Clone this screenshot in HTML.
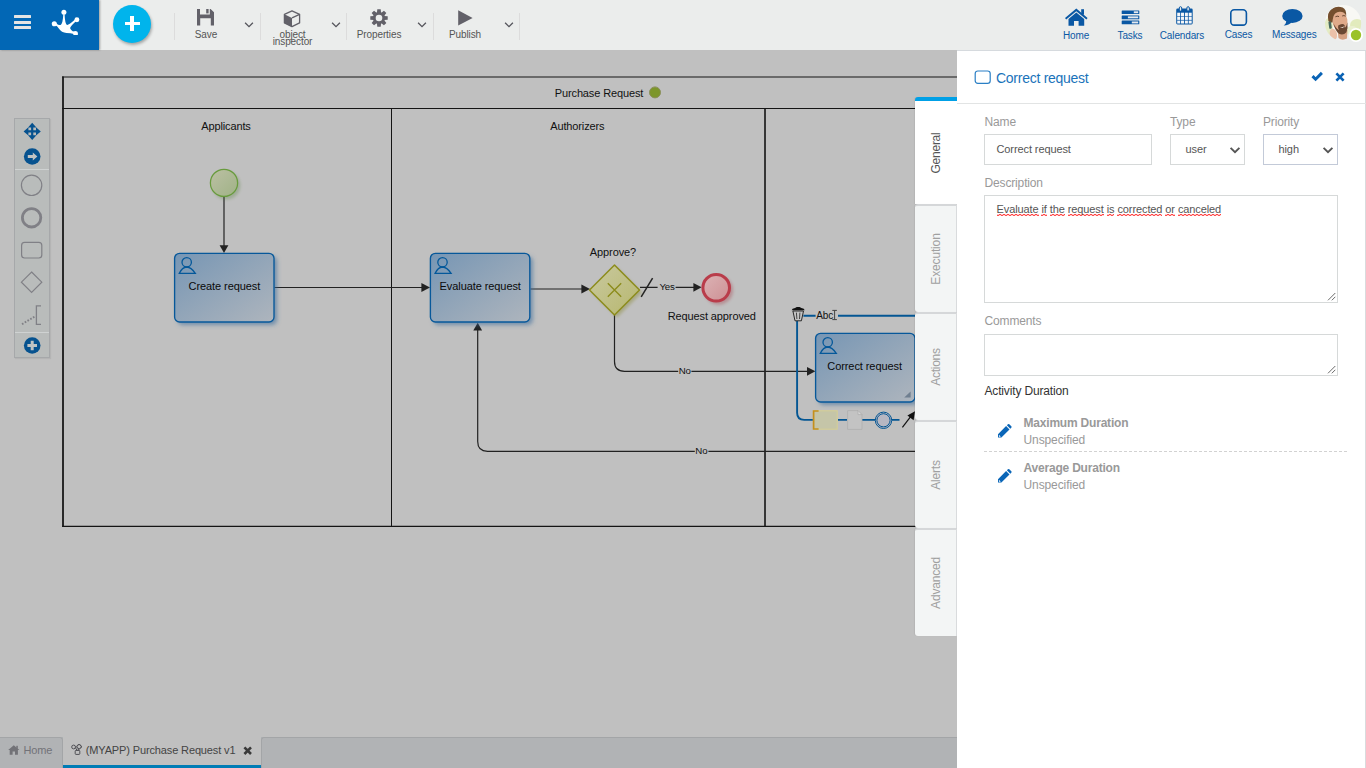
<!DOCTYPE html>
<html lang="en">
<head>
<meta charset="utf-8">
<title>Purchase Request</title>
<style>
*{box-sizing:border-box;margin:0;padding:0}
html,body{width:1366px;height:768px;overflow:hidden}
body{position:relative;background:#c0c0c0;font-family:"Liberation Sans",Arial,sans-serif;font-size:12px;color:#333}
#header{position:absolute;left:0;top:0;width:1366px;height:50px;background:#ebedec}
#brand{position:absolute;left:0;top:0;width:99px;height:50px;background:#0267b5;box-shadow:1px 0 2px rgba(0,0,0,.35)}
#plus{position:absolute;left:113px;top:5px;width:38px;height:38px;border-radius:50%;background:#00b4ec;box-shadow:1px 2px 3px rgba(0,0,0,.3)}
.sep{position:absolute;top:13px;width:1px;height:27px;background:#dcdcdc}
.tbtn{position:absolute;top:0;height:50px;color:#555;font-size:11px;text-align:center;line-height:8px}
.tbtn svg{position:absolute}
.tlabel{position:absolute;left:0;width:100%;text-align:center}
.nav{position:absolute;top:0;height:50px;color:#0a5aa8;font-size:11px;text-align:center}
#canvas{position:absolute;left:0;top:50px;width:957px;height:688px}
#panel{position:absolute;left:957px;top:50px;width:409px;height:718px;background:#fff;box-shadow:inset 0 1px 0 #d6dade,inset -1px 0 0 #d9dbdd}
#vtabs{position:absolute;left:915px;top:97px;width:42px}
.vtab{position:absolute;left:0;width:42px;background:#f3f5f5;border-top:2px solid #d5d7d9;border-right:1px solid #d9dbdd;border-radius:3px 0 0 3px;box-shadow:-1px 0 1px rgba(0,0,0,.06)}
.vtab span{position:absolute;left:50%;top:50%;transform:translate(-50%,-50%) rotate(-90deg);white-space:nowrap;font-size:12px;color:#a0a0a0;}
#btabs{position:absolute;left:0;top:737px;width:957px;height:31px;background:#b1b3b5}

.abs{position:absolute}
.t{position:absolute;white-space:nowrap;line-height:1}
#ptitle{font-size:14px;color:#1a73ba;letter-spacing:-.27px}
#phr{position:absolute;left:0;top:53px;width:409px;height:1px;background:#e2e4e4}
.lbl{font-size:12px;color:#999;letter-spacing:-.15px}
.inp{position:absolute;border:1px solid #d6d9d9;background:#fff}
.val{font-size:11px;color:#555;letter-spacing:-.1px}
#desc u{text-decoration:none;display:inline-block;padding-bottom:.6px;background:repeating-linear-gradient(90deg,rgba(255,20,20,.75) 0 2px,rgba(255,20,20,.2) 2px 4px) 0 100%/100% 1px no-repeat,repeating-linear-gradient(90deg,rgba(255,20,20,.25) 0 2px,rgba(255,20,20,.8) 2px 4px) 0 calc(100% - 1px)/100% 1px no-repeat}
.dur{font-size:12px;font-weight:700;color:#999;letter-spacing:-.2px}
.uns{font-size:12px;color:#999;letter-spacing:-.1px}
.dash{position:absolute;left:27px;width:363px;height:1px;background:repeating-linear-gradient(90deg,#d2d2d2 0 3px,transparent 3px 5px)}

.hb{position:absolute;left:14.3px;width:16.8px;height:2.8px;background:#e4e4e4;border-radius:.5px}
#plus i{position:absolute;background:#fff;display:block}
.tl{font-size:10px;color:#555;text-align:center;letter-spacing:-.1px}
.nl{font-size:10px;color:#0a58a4;text-align:center;letter-spacing:-.13px}

.vtab.act{background:#fff;border-top:4px solid #00a0e6;border-right:0;border-radius:3px 0 0 0}
#bt1{position:absolute;left:0;top:0;width:63px;height:31px;border-right:1px solid #a3a5a7;border-top:1px solid #a3a5a7;border-radius:0 3px 0 0}
#bt2{position:absolute;left:63px;top:0;width:198px;height:31px;background:#c0c0c0;border-bottom:3px solid #007cb5}
#bt3{position:absolute;left:261px;top:0;width:696px;height:31px;border-left:1px solid #a3a5a7;border-top:1px solid #a3a5a7;border-radius:3px 0 0 0}

#pal{position:absolute;left:14px;top:118px;width:36px;height:240px;background:#b9bcbb;border:1px solid #a6a8aa;box-shadow:1px 1px 1px rgba(0,0,0,.06)}
</style>
</head>
<body>
<div id="header">
  <div id="brand">
    <div class="hb" style="top:15px"></div><div class="hb" style="top:21px"></div><div class="hb" style="top:26.2px"></div>
    <svg class="abs" style="left:50px;top:8px" width="32" height="30" viewBox="50 8 32 30">
      <g fill="#fff"><circle cx="63.9" cy="12.3" r="2.5"/><circle cx="76.9" cy="19.8" r="2.45"/><circle cx="54.3" cy="23.7" r="2.55"/><path d="M73.2 31.6 Q75.3 30.2 77.2 31.6 Q78.4 33 77.8 34.9 H73.4 Z"/>
      <path d="M56.3 23.2 Q58.8 25.7 60.6 24.9 Q62.9 23.4 63.3 14.2 L64.6 14.2 Q64.9 23.6 67 24.9 Q68.4 25.4 75.6 19 L76.8 20.5 Q70.6 26 70.2 27.8 Q69.9 29.9 74.2 32 L74 33.9 Q70.5 32.9 66.5 32.9 Q61.5 32.8 58.8 28.6 Q57.4 26.2 55.4 25.2 Z"/></g>
    </svg>
  </div>
  <div id="plus"><i style="left:11.5px;top:16.6px;width:15.6px;height:3.6px"></i><i style="left:17.2px;top:11.3px;width:4.2px;height:14.4px"></i></div>
  <div class="sep" style="left:174px"></div><div class="sep" style="left:260px"></div><div class="sep" style="left:346px"></div><div class="sep" style="left:433px"></div><div class="sep" style="left:519px"></div>

  <svg class="abs" style="left:197px;top:9px" width="17" height="17" viewBox="0 0 17 17"><path d="M0 0 H13.6 L17 3.2 V16.4 H0 Z M3 0 V5.6 H12.8 V0 Z M3.2 9.2 V16.4 H13.8 V9.2 Z" fill="#626169" fill-rule="evenodd"/><rect x="9.2" y="0" width="2.4" height="4.4" fill="#626169"/></svg>
  <div class="t tl" style="left:174px;width:64px;top:29.5px">Save</div><svg class="abs" style="left:244px;top:20.8px" width="10" height="8" viewBox="0 0 10 8"><path d="M1.1 1.8 L5 5.7 L8.9 1.8" fill="none" stroke="#55555c" stroke-width="1.3"/></svg>

  <svg class="abs" style="left:283px;top:9.6px" width="18" height="18" viewBox="0 0 18 18"><path d="M9 .9 L16.6 4.3 V12.9 L9 16.7 L1.4 12.9 V4.3 Z" fill="#ebedec" stroke="#626169" stroke-width="1.3" stroke-linejoin="round"/><path d="M1.4 4.3 L9 7.9 V16.7 L1.4 12.9 Z" fill="#626169"/><path d="M9 7.9 L16.6 4.3" stroke="#626169" stroke-width="1.3"/></svg>
  <div class="t tl" style="left:260px;width:65px;top:29.5px">object</div><div class="t tl" style="left:260px;width:65px;top:37.4px">inspector</div><svg class="abs" style="left:330.5px;top:20.8px" width="10" height="8" viewBox="0 0 10 8"><path d="M1.1 1.8 L5 5.7 L8.9 1.8" fill="none" stroke="#55555c" stroke-width="1.3"/></svg>

  <svg class="abs" style="left:370.1px;top:9.1px" width="18" height="18" viewBox="-9 -9 18 18"><g fill="#626169"><circle r="6.1"/><path id="tooth" d="M-1.7 -8.7 H1.7 L2.1 -5 H-2.1 Z M-1.7 8.7 H1.7 L2.1 5 H-2.1 Z"/><use href="#tooth" transform="rotate(45)"/><use href="#tooth" transform="rotate(90)"/><use href="#tooth" transform="rotate(135)"/></g><circle r="3.3" fill="#ebedec"/></svg>
  <div class="t tl" style="left:346px;width:66px;top:29.5px">Properties</div><svg class="abs" style="left:417px;top:20.8px" width="10" height="8" viewBox="0 0 10 8"><path d="M1.1 1.8 L5 5.7 L8.9 1.8" fill="none" stroke="#55555c" stroke-width="1.3"/></svg>

  <svg class="abs" style="left:458px;top:9.5px" width="15" height="16" viewBox="0 0 15 16"><path d="M.2 .3 L14.6 7.9 L.2 15.6 Z" fill="#626169"/></svg>
  <div class="t tl" style="left:433px;width:64px;top:29.5px">Publish</div><svg class="abs" style="left:503.5px;top:20.8px" width="10" height="8" viewBox="0 0 10 8"><path d="M1.1 1.8 L5 5.7 L8.9 1.8" fill="none" stroke="#55555c" stroke-width="1.3"/></svg>

  <svg class="abs" style="left:1064px;top:8px" width="24" height="18" viewBox="1064 8 24 18"><g fill="#0a58a4"><path d="M1076.3 8.6 L1087.6 18 L1086.4 19.5 L1076.3 11.2 L1066.2 19.5 L1065 18 Z"/><path d="M1076.3 12.4 L1084.2 18.9 V25.8 H1078.6 V21 H1074 V25.8 H1068.5 V18.9 Z"/><rect x="1081.2" y="9.2" width="2.8" height="5.5"/></g></svg>
  <div class="t nl" style="left:1046px;width:60px;top:31.2px">Home</div>

  <svg class="abs" style="left:1121px;top:9.5px" width="19" height="15" viewBox="0 0 19 15"><g fill="#0a58a4"><rect x=".7" y=".4" width="17.6" height="3.7" rx=".5"/><rect x=".7" y="5.5" width="17.6" height="3.7" rx=".5"/><rect x=".7" y="10.6" width="17.6" height="3.7" rx=".5"/></g><g fill="#e4e9ef"><rect x="12.8" y="1.3" width="4.4" height="1.9"/><rect x="6.9" y="6.4" width="10.3" height="1.9"/><rect x="10.8" y="11.5" width="6.4" height="1.9"/></g></svg>
  <div class="t nl" style="left:1100px;width:60px;top:31.2px">Tasks</div>

  <svg class="abs" style="left:1175px;top:6.2px" width="19" height="20" viewBox="0 0 19 20"><rect x="1.2" y="2.5" width="16.5" height="16" rx="1.4" fill="#0a58a4"/><g fill="#f4f6f8"><rect x="2.2" y="6.7" width="3" height="3.3"/><rect x="6.0" y="6.7" width="3" height="3.3"/><rect x="9.9" y="6.7" width="3" height="3.3"/><rect x="13.7" y="6.7" width="3" height="3.3"/><rect x="2.2" y="10.6" width="3" height="3.3"/><rect x="6.0" y="10.6" width="3" height="3.3"/><rect x="9.9" y="10.6" width="3" height="3.3"/><rect x="13.7" y="10.6" width="3" height="3.3"/><rect x="2.2" y="14.6" width="3" height="2.9"/><rect x="6.0" y="14.6" width="3" height="2.9"/><rect x="9.9" y="14.6" width="3" height="2.9"/><rect x="13.7" y="14.6" width="3" height="2.9"/></g><g fill="#ebedec" stroke="#0a58a4" stroke-width="1"><rect x="4.3" y=".7" width="2.4" height="4.4" rx="1.2"/><rect x="11.9" y=".7" width="2.4" height="4.4" rx="1.2"/></g></svg>
  <div class="t nl" style="left:1152px;width:60px;top:31.2px">Calendars</div>

  <svg class="abs" style="left:1229px;top:8px" width="19" height="19" viewBox="0 0 19 19"><rect x="1.8" y="1.7" width="15.6" height="15.4" rx="3.4" fill="none" stroke="#0a58a4" stroke-width="1.6"/></svg>
  <div class="t nl" style="left:1208.5px;width:60px;top:30.3px">Cases</div>

  <svg class="abs" style="left:1281px;top:8px" width="23" height="19" viewBox="1281 8 23 19"><g fill="#0a58a4"><ellipse cx="1292.4" cy="15.9" rx="10.2" ry="7"/><path d="M1286.2 20 Q1286.6 23.6 1283.6 25.6 Q1289 25.4 1292.4 21.6 Z"/></g></svg>
  <div class="t nl" style="left:1264.3px;width:60px;top:30.3px">Messages</div>

  <svg class="abs" style="left:1322px;top:2px" width="44" height="44" viewBox="1322 2 44 44">
    <defs><clipPath id="avc"><circle cx="1343.1" cy="23" r="18.1"/></clipPath><filter id="avb" x="-10%" y="-10%" width="120%" height="120%"><feGaussianBlur stdDeviation=".5"/></filter></defs>
    <g clip-path="url(#avc)"><g filter="url(#avb)">
      <rect x="1322" y="2" width="44" height="44" fill="#f8f8f4"/>
      <ellipse cx="1357" cy="25" rx="7" ry="6" fill="#e2ebbd"/><ellipse cx="1352" cy="31" rx="6" ry="5" fill="#eaf0d0"/>
      <ellipse cx="1328.5" cy="27" rx="4.5" ry="9" fill="#e4ecc4"/>
      <path d="M1334 44 L1336 36 L1348 34 L1352 38 L1356 44 Z" fill="#efeeee"/>
      <path d="M1337.5 30 L1347.5 30 L1347 38.5 Q1342 41 1338.5 38 Z" fill="#d49f80"/>
      <ellipse cx="1339.8" cy="20.6" rx="7.6" ry="10.6" fill="#e0aa8a" transform="rotate(-10 1339.8 20.6)"/>
      <path d="M1333.4 23 Q1334.8 30.5 1339 33.8 Q1343.2 35.8 1346.4 32.3 Q1348.2 28 1347.4 22.5 Q1346.4 27 1344.6 28.2 Q1345.6 25.4 1343.6 24.2 Q1341 23.2 1338.2 25.6 Q1337.6 28.4 1339 30 Q1335.4 28.2 1333.4 23 Z" fill="#6a4732"/>
      <path d="M1339.4 26.6 Q1342.4 28 1345 25.8 Q1343 29.6 1339.4 26.6 Z" fill="#efe2da"/><path d="M1339 30 Q1342 31.8 1344.6 28.2 Q1343.6 31.6 1341 32 Z" fill="#6a4732"/>
      <path d="M1328.4 21 Q1326.6 12.5 1331.6 9 Q1337 5.6 1342.6 7.6 Q1346.6 9.6 1346.2 16 Q1344.4 11.4 1339.4 11.8 Q1334.6 12.4 1333.4 16.6 Q1332.6 19.6 1332.4 22.5 Q1330 23 1328.4 21 Z" fill="#74502f"/>
      <path d="M1335.4 16.8 Q1337.2 15.6 1339 16.6 M1342.2 16 Q1344 15 1345.6 16.2" stroke="#5a3c28" stroke-width=".9" fill="none"/>
      <ellipse cx="1333.4" cy="34.2" rx="3.6" ry="5.6" fill="#ecc1aa" transform="rotate(-14 1333.4 34.2)"/>
      <rect x="1328.8" y="21.4" width="2.6" height="7.4" rx="1" fill="#4a6a5e" transform="rotate(-8 1330 25)"/>
    </g></g>
    <circle cx="1356" cy="35" r="7" fill="#fff"/><circle cx="1356" cy="35" r="5.2" fill="#9bc22a"/>
  </svg>
</div>
<div id="canvas">
<svg id="diagram" width="957" height="688" viewBox="0 50 957 688" font-family="Liberation Sans, Arial, sans-serif">
<defs>
  <linearGradient id="gTask" x1="0" y1="0" x2="1" y2="1">
    <stop offset="0" stop-color="#7796b4"/><stop offset="1" stop-color="#aeb5bd"/>
  </linearGradient>
  <linearGradient id="gStart" x1="0" y1="0" x2="1" y2="1">
    <stop offset="0" stop-color="#bcc0a4"/><stop offset="1" stop-color="#9fb286"/>
  </linearGradient>
  <linearGradient id="gGate" x1="0" y1="0" x2="1" y2="1">
    <stop offset="0" stop-color="#c9c9a0"/><stop offset="1" stop-color="#b7b76e"/>
  </linearGradient>
  <linearGradient id="gEnd" x1="0" y1="0" x2="1" y2="1">
    <stop offset="0" stop-color="#dcb3b5"/><stop offset="1" stop-color="#cd9094"/>
  </linearGradient>
  <filter id="shB" x="-20%" y="-20%" width="150%" height="150%">
    <feGaussianBlur in="SourceAlpha" stdDeviation="2" result="b"/><feOffset in="b" dx="2.5" dy="3" result="o"/>
    <feFlood flood-color="#3a6c9c" flood-opacity=".6" result="f"/><feComposite in="f" in2="o" operator="in"/>
  </filter>
  <filter id="blur2" x="-30%" y="-30%" width="160%" height="160%"><feGaussianBlur stdDeviation="1.8"/></filter>
  <g id="user" fill="none" stroke="#04589a" stroke-width="1.3">
    <circle cx="12.6" cy="8.7" r="4.7"/>
    <path d="M5.2 19.7 Q8.2 13.6 12.6 13.4 Q17 13.6 21.2 19.7 Z" stroke-linejoin="miter"/>
  </g>
</defs>
<!-- pool -->
<g fill="none" stroke="#141414">
  <path d="M62 76.9 H957" stroke-width="1.05"/>
  <path d="M63 76.4 V526.9" stroke-width="1.75"/>
  <path d="M62.2 108.5 H957 M391.5 108 V526.3" stroke-width="1"/>
  <path d="M765 108 V526.3" stroke-width="1.6"/>
  <path d="M62.2 526.3 H957" stroke-width="1.2"/>
</g>
<g font-size="11" fill="#111" text-anchor="middle" letter-spacing="-.13">
  <text x="599" y="96.9">Purchase Request</text>
  <text x="226" y="130">Applicants</text>
  <text x="577.3" y="130">Authorizers</text>
</g>
<circle cx="655" cy="92.4" r="5.5" fill="#7d962b" stroke="#8a8f5a" stroke-width="1"/>
<!-- flows -->
<g fill="none" stroke="#222" stroke-width="1.2">
  <path d="M224 197 V246"/>
  <path d="M274.5 287.5 H422"/>
  <path d="M530.5 289 H582"/>
  <path d="M640 287.3 H657.6 M675.6 287.3 H694"/>
  <path d="M614.5 315 V361.5 Q614.5 371.3 624.5 371.3 H678.2 M691.4 371.3 H808"/>
  <path d="M957 451.3 H708.4 M694.8 451.3 H487.5 Q477.7 451.3 477.7 441.5 V330"/>
  <path d="M641.2 296.8 L652.6 278.2" stroke-width="1.5"/>
</g>
<g fill="#222">
  <path d="M219.6 245.3 H228.4 L224 253 Z"/>
  <path d="M421.4 283.1 V291.9 L430 287.5 Z"/>
  <path d="M581.4 284.6 V293.4 L590 289 Z"/>
  <path d="M693.4 282.9 V291.7 L701.6 287.3 Z"/>
  <path d="M807 366.9 V375.7 L815.4 371.3 Z"/>
  <path d="M473.3 330.6 H482.1 L477.7 322.8 Z"/>
</g>
<g font-size="9.7" fill="#111" letter-spacing="-.15">
  <text x="659.4" y="290.3">Yes</text>
  <text x="678.7" y="374.3">No</text>
  <text x="695.3" y="454.3">No</text>
</g>
<!-- start -->
<circle cx="226.3" cy="185.5" r="14" fill="#4c7a2c" opacity=".28" filter="url(#blur2)"/>
<circle cx="224" cy="182.9" r="13.6" fill="url(#gStart)" stroke="#689b3d" stroke-width="1.25"/>
<g><rect x="174.6" y="253.3" width="99.4" height="68.7" rx="5" fill="#000" filter="url(#shB)"/>
<rect x="174.6" y="253.3" width="99.4" height="68.7" rx="5" fill="url(#gTask)" stroke="#07589a" stroke-width="1.35"/>
<use href="#user" x="174.1" y="253.6"/>
<text x="224.39999999999998" y="290.0" font-size="11" fill="#0a0a0a" text-anchor="middle" letter-spacing="-.08">Create request</text></g>
<g><rect x="430.4" y="253.3" width="99.4" height="68.7" rx="5" fill="#000" filter="url(#shB)"/>
<rect x="430.4" y="253.3" width="99.4" height="68.7" rx="5" fill="url(#gTask)" stroke="#07589a" stroke-width="1.35"/>
<use href="#user" x="429.9" y="253.6"/>
<text x="480.2" y="290.0" font-size="11" fill="#0a0a0a" text-anchor="middle" letter-spacing="-.08">Evaluate request</text></g>
<!-- gateway -->
<path d="M617 267.5 L642 292.5 L617 317.5 L592 292.5 Z" fill="#7c7c10" opacity=".35" filter="url(#blur2)"/>
<path d="M614.5 265 L639.5 290 L614.5 315 L589.5 290 Z" fill="url(#gGate)" stroke="#8c8c1c" stroke-width="1.5" stroke-linejoin="round"/>
<path d="M607.8 283.3 L621.2 296.7 M621.2 283.3 L607.8 296.7" stroke="#8c8c1c" stroke-width="1.4" fill="none"/>
<text x="613" y="255.6" font-size="11" fill="#111" text-anchor="middle" letter-spacing="-.1">Approve?</text>
<!-- end -->
<circle cx="718.6" cy="290.2" r="14.5" fill="#a02030" opacity=".3" filter="url(#blur2)"/>
<circle cx="716.2" cy="287.8" r="13.3" fill="url(#gEnd)" stroke="#b93c4a" stroke-width="3"/>
<text x="711.8" y="320" font-size="11" fill="#111" text-anchor="middle" letter-spacing="-.12">Request approved</text>
<!-- selected task frame -->
<g fill="none" stroke="#045693" stroke-width="1.9">
  <path d="M803.4 315.7 H815.6 M838 315.7 H957"/>
  <path d="M797.1 321 V412.8 Q797.1 419.9 804.2 419.9 H813 M838 419.9 H847 M862 419.9 H875 M892 419.9 H899.5"/>
</g>
<g><rect x="815.6" y="333.3" width="99.4" height="68.7" rx="5" fill="#000" filter="url(#shB)"/>
<rect x="815.6" y="333.3" width="99.4" height="68.7" rx="5" fill="url(#gTask)" stroke="#07589a" stroke-width="1.35"/>
<use href="#user" x="815.1" y="333.6"/>
<text x="864.6" y="370.0" font-size="11" fill="#0a0a0a" text-anchor="middle" letter-spacing="-.08">Correct request</text><path d="M910.6 391.4 V397.6 H904.2 Z" fill="#6f7f90"/></g>
<text x="816.2" y="319.3" font-size="10" fill="#111" letter-spacing="-.1">Abc</text>
<path d="M832.3 310.4 H836.9 M832.3 319.6 H836.9 M834.6 310.4 V319.6" stroke="#444" stroke-width="1" fill="none"/>
<!-- trash -->
<path d="M792.9 311 L795 320.8 H801.4 L803.5 311 Z" fill="#c4c4c4" stroke="#2a2a2a" stroke-width="1"/>
<path d="M796.4 312.6 L796.9 319 M799.9 312.6 L799.5 319" stroke="#333" stroke-width=".9" fill="none"/>
<path d="M791.7 310.3 Q791.9 308.7 795 308.1 L796.8 307 H799.6 L801.4 308.1 Q804.5 308.7 804.7 310.3 Z" fill="#111"/>
<!-- mini toolbar -->
<rect x="813.4" y="410.8" width="23.8" height="18.4" fill="#c5c5a8" stroke="#d6cf92" stroke-width="1"/>
<path d="M818.6 411 H813.6 V429 H818.6" fill="none" stroke="#c48f1c" stroke-width="1.7"/>
<path d="M847.6 410.6 H858 L862 414.6 V429.4 H847.6 Z" fill="#c3c3c3" stroke="#aeaeae" stroke-width=".8"/>
<path d="M858 410.6 V414.6 H862 Z" fill="#d6d6d6" stroke="#aeaeae" stroke-width=".7"/>
<circle cx="883.5" cy="420.3" r="8.2" fill="#b7b7c2" stroke="#045693" stroke-width="1"/>
<circle cx="883.5" cy="420.3" r="6.6" fill="none" stroke="#045693" stroke-width="1"/>
<path d="M902.4 427.4 L911 416.2" stroke="#111" stroke-width="1.2" fill="none"/>
<path d="M915 411.2 L913.6 420.2 L907.4 415.4 Z" fill="#111"/>
</svg>
</div>
<div id="pal">
  <svg width="36" height="240" viewBox="14 118 36 240" style="position:absolute;left:-1px;top:-1px">
    <g stroke="#cfd2d2" stroke-width="1"><path d="M15 169.5 H49 M15 332.5 H49"/></g>
    <g fill="#06528f">
      <path d="M32.2 122.8 L36.4 127.6 H33.3 V130.3 H36 V127.2 L40.8 131.4 L36 135.6 V132.5 H33.3 V135.2 H36.4 L32.2 140 L28 135.2 H31.1 V132.5 H28.4 V135.6 L23.6 131.4 L28.4 127.2 V130.3 H31.1 V127.6 H28 Z"/>
      <circle cx="32.2" cy="156.5" r="8.3"/>
      <circle cx="32.2" cy="345.5" r="8.3"/>
    </g>
    <path d="M27.8 155 H32.8 V152.6 L37.4 156.5 L32.8 160.4 V158 H27.8 Z" fill="#c0c3c3"/>
    <path d="M27.4 344 H30.7 V340.7 H33.7 V344 H37 V347 H33.7 V350.3 H30.7 V347 H27.4 Z" fill="#c0c3c3"/>
    <g fill="none" stroke="#808086">
      <circle cx="31.6" cy="185.3" r="10.2" stroke-width="1.2"/>
      <circle cx="31.6" cy="217.8" r="9.2" stroke-width="2.8"/>
      <rect x="21.6" y="242.4" width="20.2" height="15.6" rx="3" stroke-width="1.2"/>
      <path d="M31.6 272 L41.8 282.2 L31.6 292.4 L21.4 282.2 Z" stroke-width="1.2"/>
      <path d="M41 305.8 H36.4 V324.4 H41" stroke-width="1.3"/>
      <path d="M22 324.2 L35.6 316" stroke-width="1.9" stroke-dasharray="1.7 1.5"/>
    </g>
  </svg>
</div>
<div id="vtabs">
  <div class="vtab act" style="top:0;height:107px"><span style="color:#555;letter-spacing:-.25px">General</span></div>
  <div class="vtab" style="top:107px;height:108px"><span style="letter-spacing:-.15px">Execution</span></div>
  <div class="vtab" style="top:215px;height:108px"><span style="letter-spacing:-.3px">Actions</span></div>
  <div class="vtab" style="top:323px;height:108px"><span style="letter-spacing:-.2px">Alerts</span></div>
  <div class="vtab" style="top:431px;height:108px"><span style="letter-spacing:-.2px">Advanced</span></div>
</div>
<div id="panel">
  <svg class="abs" style="left:17px;top:19.5px" width="18" height="15" viewBox="0 0 18 15"><rect x="1.2" y="1" width="15" height="12.4" rx="2.6" fill="none" stroke="#2a7fc5" stroke-width="1.2"/></svg>
  <div class="t" id="ptitle" style="left:39px;top:21px">Correct request</div>
  <svg class="abs" style="left:353.6px;top:21.2px" width="13" height="11" viewBox="0 0 13 11"><path d="M1.5 5.1 L4.6 8.2 L10.9 1.9" fill="none" stroke="#0a64b6" stroke-width="3"/></svg>
  <svg class="abs" style="left:378.1px;top:21.7px" width="10" height="10" viewBox="0 0 10 10"><path d="M1.4 1.4 L8.6 8.6 M8.6 1.4 L1.4 8.6" fill="none" stroke="#0a62b4" stroke-width="2.7"/></svg>
  <div id="phr"></div>

  <div class="t lbl" style="left:27.5px;top:65.5px">Name</div>
  <div class="t lbl" style="left:213px;top:65.5px">Type</div>
  <div class="t lbl" style="left:306px;top:65.5px">Priority</div>
  <div class="inp" style="left:27px;top:84px;width:168px;height:31px"><span class="t val" style="left:11.5px;top:8.5px">Correct request</span></div>
  <div class="inp" style="left:213px;top:84px;width:75px;height:31px"><span class="t val" style="left:14.5px;top:8.5px">user</span>
    <svg class="abs" style="left:58.3px;top:10.5px" width="12" height="9" viewBox="0 0 12 9"><path d="M1.6 1.8 L6 6.2 L10.4 1.8" fill="none" stroke="#555" stroke-width="1.9"/></svg></div>
  <div class="inp" style="left:306px;top:84px;width:75px;height:31px;border-color:#c3cad8"><span class="t val" style="left:14.5px;top:8.5px">high</span>
    <svg class="abs" style="left:58.3px;top:10.5px" width="12" height="9" viewBox="0 0 12 9"><path d="M1.6 1.8 L6 6.2 L10.4 1.8" fill="none" stroke="#555" stroke-width="1.9"/></svg></div>

  <div class="t lbl" style="left:27.5px;top:126.5px">Description</div>
  <div class="inp" style="left:27px;top:145px;width:354px;height:108px"><span class="t val" id="desc" style="left:11.5px;top:8.3px"><u>Evaluate</u> <u>if</u> <u>the</u> <u>request</u> <u>is</u> <u>corrected</u> <u>or</u> <u>canceled</u></span>
    <svg class="abs" style="right:1px;bottom:1px" width="10" height="10" viewBox="0 0 10 10"><path d="M9.3 2 L2 9.3 M9.3 5.8 L5.8 9.3" stroke="#5a5a5a" stroke-width=".9" fill="none"/></svg></div>

  <div class="t lbl" style="left:27.5px;top:264.5px">Comments</div>
  <div class="inp" style="left:27px;top:284px;width:354px;height:42px">
    <svg class="abs" style="right:1px;bottom:1px" width="10" height="10" viewBox="0 0 10 10"><path d="M9.3 2 L2 9.3 M9.3 5.8 L5.8 9.3" stroke="#5a5a5a" stroke-width=".9" fill="none"/></svg></div>

  <div class="t" style="left:27.5px;top:334.5px;font-size:12px;color:#333;letter-spacing:-.16px">Activity Duration</div>

  <svg class="abs pencil" style="left:40.8px;top:374px" width="14" height="14" viewBox="0 0 14 14"><path d="M0 13.6 L0 10.2 L8.1 2.1 L11.5 5.5 L3.4 13.6 Z M8.9 1.3 L9.9 .3 Q10.6 -.3 11.3 .3 L13.3 2.3 Q13.9 3 13.3 3.7 L12.3 4.7 Z" fill="#0a66b8"/><path d="M1.1 10.9 L2.7 12.5 L1.6 12.9 L.8 12 Z" fill="#fff"/></svg>
  <div class="t dur" style="left:66.5px;top:366.5px">Maximum Duration</div>
  <div class="t uns" style="left:66.5px;top:383.5px">Unspecified</div>
  <div class="dash" style="top:401px"></div>
  <svg class="abs pencil" style="left:40.8px;top:419px" width="14" height="14" viewBox="0 0 14 14"><path d="M0 13.6 L0 10.2 L8.1 2.1 L11.5 5.5 L3.4 13.6 Z M8.9 1.3 L9.9 .3 Q10.6 -.3 11.3 .3 L13.3 2.3 Q13.9 3 13.3 3.7 L12.3 4.7 Z" fill="#0a66b8"/><path d="M1.1 10.9 L2.7 12.5 L1.6 12.9 L.8 12 Z" fill="#fff"/></svg>
  <div class="t dur" style="left:66.5px;top:411.5px">Average Duration</div>
  <div class="t uns" style="left:66.5px;top:428.5px">Unspecified</div>
</div>
<div id="btabs">
  <div id="bt1">
    <svg class="abs" style="left:8.2px;top:6.8px" width="12" height="10" viewBox="0 0 12 10"><path d="M5.8 .2 L11.4 5 H9.9 V9.8 H7 V6.6 H4.6 V9.8 H1.7 V5 H.2 Z" fill="#727277"/><rect x="8.3" y=".8" width="1.5" height="3" fill="#727277"/></svg>
    <div class="t" style="left:23.4px;top:6.5px;font-size:11px;color:#727278;letter-spacing:-.1px">Home</div>
  </div>
  <div id="bt2">
    <svg class="abs" style="left:8px;top:7px" width="12" height="12" viewBox="0 0 12 12"><g fill="none" stroke="#505055" stroke-width="1"><circle cx="2.6" cy="3" r="1.9"/><rect x="6.2" y=".8" width="3.8" height="3.8" rx=".6" transform="rotate(45 8.1 2.7)"/><rect x="4.2" y="6.4" width="4.6" height="4" rx=".8"/><path d="M4.4 3.6 L6 6.4 M7.6 4.6 L7 6.4"/></g></svg>
    <div class="t" style="left:22.7px;top:7.5px;font-size:11px;color:#444;letter-spacing:-.13px">(MYAPP) Purchase Request v1</div>
    <svg class="abs" style="left:180.3px;top:9.2px" width="10" height="10" viewBox="0 0 10 10"><path d="M1.4 1.4 L8 8 M8 1.4 L1.4 8" stroke="#3a3a3a" stroke-width="2.6" fill="none"/></svg>
  </div>
  <div id="bt3"></div>
</div>
</body>
</html>
